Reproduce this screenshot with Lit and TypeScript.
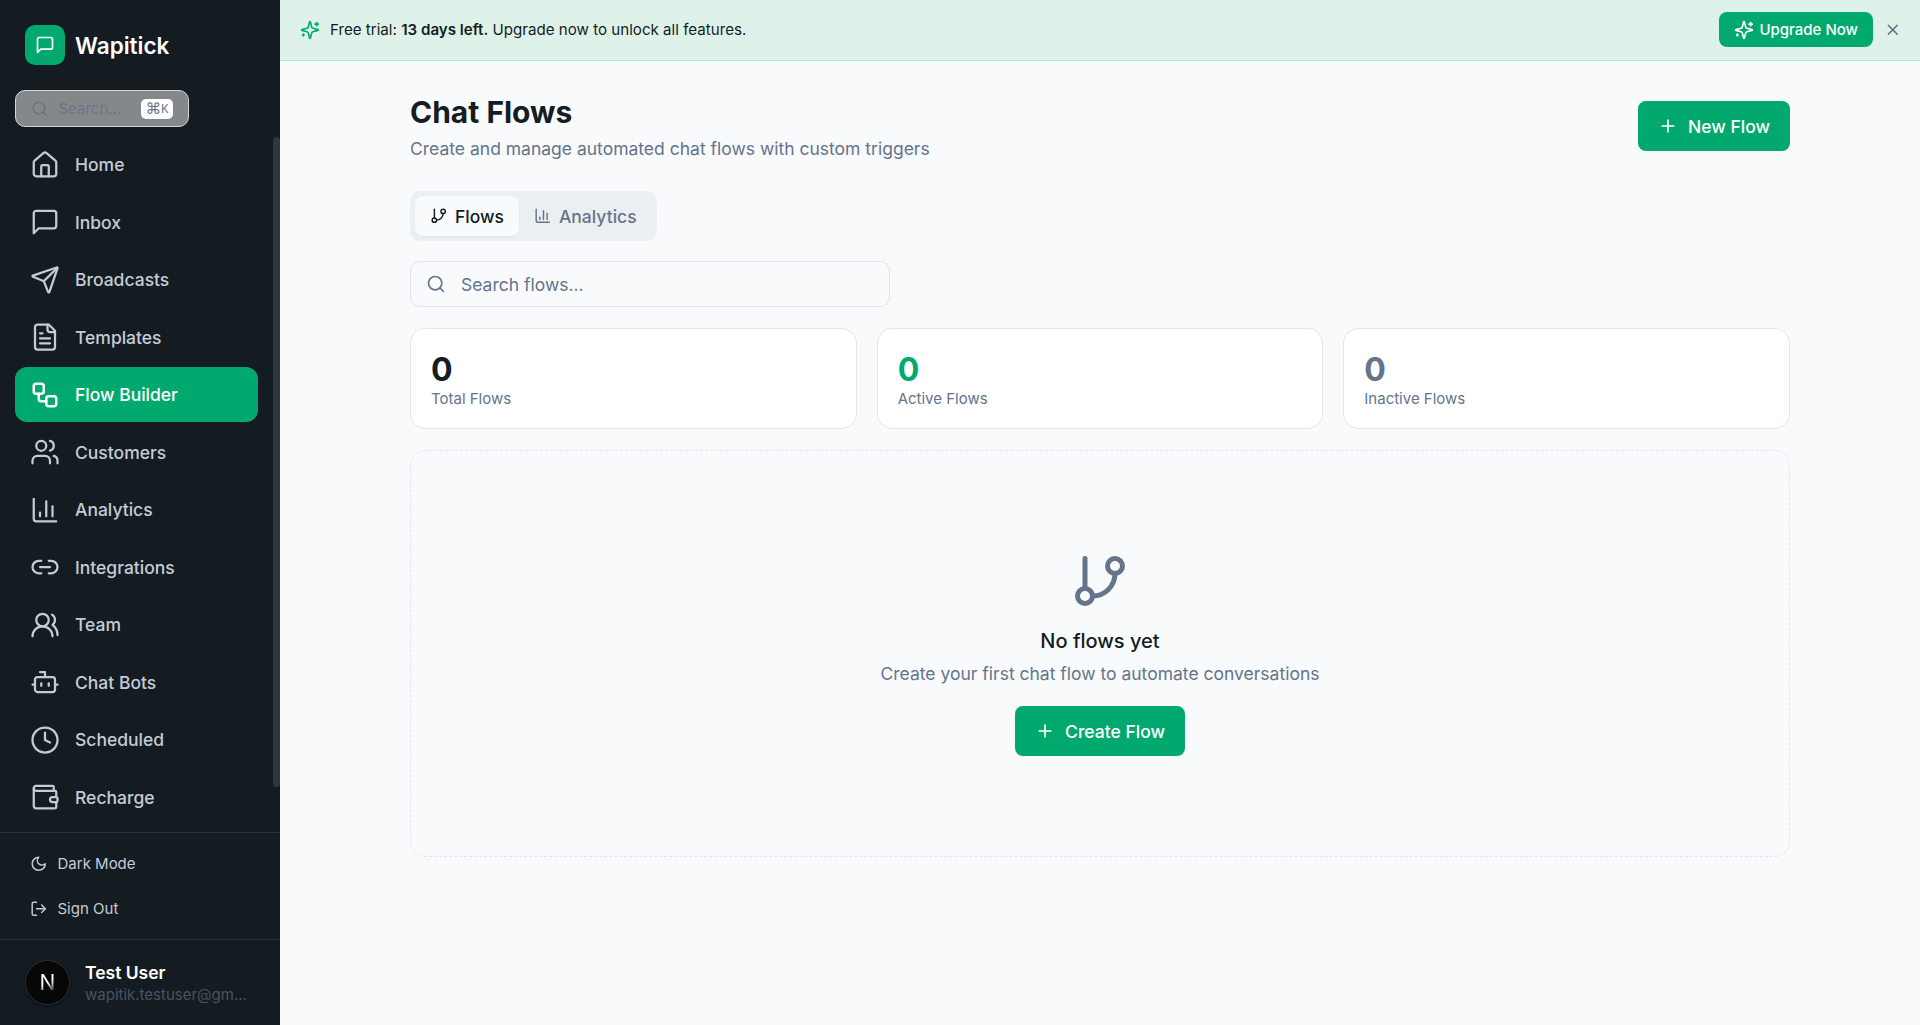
import { LitElement, html, css, svg } from 'lit';
import { customElement } from 'lit/decorators.js';

const icons: Record<string, unknown> = {
  home: svg`<path d="M15 21v-8a1 1 0 0 0-1-1h-4a1 1 0 0 0-1 1v8"/><path d="M3 10a2 2 0 0 1 .709-1.528l7-5.999a2 2 0 0 1 2.582 0l7 5.999A2 2 0 0 1 21 10v9a2 2 0 0 1-2 2H5a2 2 0 0 1-2-2z"/>`,
  inbox: svg`<path d="M21 15a2 2 0 0 1-2 2H7l-4 4V5a2 2 0 0 1 2-2h14a2 2 0 0 1 2 2z"/>`,
  send: svg`<path d="M14.536 21.686a.5.5 0 0 0 .937-.024l6.5-19a.496.496 0 0 0-.635-.635l-19 6.5a.5.5 0 0 0-.024.937l7.93 3.18a2 2 0 0 1 1.112 1.11z"/><path d="m21.854 2.147-10.94 10.939"/>`,
  file: svg`<path d="M15 2H6a2 2 0 0 0-2 2v16a2 2 0 0 0 2 2h12a2 2 0 0 0 2-2V7Z"/><path d="M14 2v4a2 2 0 0 0 2 2h4"/><path d="M10 9H8"/><path d="M16 13H8"/><path d="M16 17H8"/>`,
  workflow: svg`<rect x="3" y="3" width="8" height="8" rx="2"/><path d="M7 11v4a2 2 0 0 0 2 2h4"/><rect x="13" y="13" width="8" height="8" rx="2"/>`,
  users: svg`<path d="M16 21v-2a4 4 0 0 0-4-4H6a4 4 0 0 0-4 4v2"/><circle cx="9" cy="7" r="4"/><path d="M22 21v-2a4 4 0 0 0-3-3.87"/><path d="M16 3.13a4 4 0 0 1 0 7.75"/>`,
  chart: svg`<path d="M3 3v16a2 2 0 0 0 2 2h16"/><path d="M18 17V9"/><path d="M13 17V5"/><path d="M8 17v-3"/>`,
  link: svg`<path d="M9 17H7A5 5 0 0 1 7 7h2"/><path d="M15 7h2a5 5 0 1 1 0 10h-2"/><line x1="8" x2="16" y1="12" y2="12"/>`,
  team: svg`<path d="M18 21a8 8 0 0 0-16 0"/><circle cx="10" cy="8" r="5"/><path d="M22 20c0-3.37-2-6.5-4-8a5 5 0 0 0-.45-8.3"/>`,
  bot: svg`<path d="M12 8V4H8"/><rect width="16" height="12" x="4" y="8" rx="2"/><path d="M2 14h2"/><path d="M20 14h2"/><path d="M15 13v2"/><path d="M9 13v2"/>`,
  clock: svg`<circle cx="12" cy="12" r="10"/><polyline points="12 6 12 12 16 14"/>`,
  wallet: svg`<path d="M19 7V4a1 1 0 0 0-1-1H5a2 2 0 0 0 0 4h15a1 1 0 0 1 1 1v4h-3a2 2 0 0 0 0 4h3a1 1 0 0 0 1-1v-2a1 1 0 0 0-1-1"/><path d="M3 5v14a2 2 0 0 0 2 2h15a1 1 0 0 0 1-1v-4"/>`,
  moon: svg`<path d="M12 3a6 6 0 0 0 9 9 9 9 0 1 1-9-9Z"/>`,
  logout: svg`<path d="M9 21H5a2 2 0 0 1-2-2V5a2 2 0 0 1 2-2h4"/><polyline points="16 17 21 12 16 7"/><line x1="21" x2="9" y1="12" y2="12"/>`,
  sparkles: svg`<path d="M9.937 15.5A2 2 0 0 0 8.5 14.063l-6.135-1.582a.5.5 0 0 1 0-.962L8.5 9.936A2 2 0 0 0 9.937 8.5l1.582-6.135a.5.5 0 0 1 .963 0L14.063 8.5A2 2 0 0 0 15.5 9.937l6.135 1.581a.5.5 0 0 1 0 .964L15.5 14.063a2 2 0 0 0-1.437 1.437l-1.582 6.135a.5.5 0 0 1-.963 0z"/><path d="M20 3v4"/><path d="M22 5h-4"/><path d="M4 17v2"/><path d="M5 18H3"/>`,
  x: svg`<path d="M18 6 6 18"/><path d="m6 6 12 12"/>`,
  plus: svg`<path d="M5 12h14"/><path d="M12 5v14"/>`,
  search: svg`<path d="m21 21-4.34-4.34"/><circle cx="11" cy="11" r="8"/>`,
  branch: svg`<line x1="6" x2="6" y1="3" y2="15"/><circle cx="18" cy="6" r="3"/><circle cx="6" cy="18" r="3"/><path d="M18 9a9 9 0 0 1-9 9"/>`,
};

const icon = (name: string, size: number, stroke = 2) => html`
  <svg class="icon" width=${size} height=${size} viewBox="0 0 24 24" fill="none" stroke="currentColor"
    stroke-width=${stroke} stroke-linecap="round" stroke-linejoin="round">${icons[name]}</svg>`;

const navItems = [
  ['home', 'Home'],
  ['inbox', 'Inbox'],
  ['send', 'Broadcasts'],
  ['file', 'Templates'],
  ['workflow', 'Flow Builder'],
  ['users', 'Customers'],
  ['chart', 'Analytics'],
  ['link', 'Integrations'],
  ['team', 'Team'],
  ['bot', 'Chat Bots'],
  ['clock', 'Scheduled'],
  ['wallet', 'Recharge'],
];

@customElement('app-root')
export class AppRoot extends LitElement {
  static override styles = css`
    :host {
      display: block;
      height: 1025px;
      font-family: Inter, 'Noto Sans', sans-serif;
      color: #141d23;
      overflow: hidden;
    }
    * { box-sizing: border-box; }
    .icon { flex: none; display: block; }

    .app { display: flex; height: 100%; }

    .sidebar {
      width: 280px;
      flex: none;
      background: #141c22;
      display: flex;
      flex-direction: column;
      color: #c3ccd6;
    }
    .brand {
      display: flex;
      gap: 10px;
      padding: 25px 25px 0;
      height: 90px;
      align-items: flex-start;
    }
    .logo {
      width: 40px;
      height: 40px;
      border-radius: 10px;
      background: #02a96f;
      color: #fff;
      display: flex;
      align-items: center;
      justify-content: center;
    }
    .brand-name {
      font-size: 22.5px;
      font-weight: 600;
      line-height: 42px;
      color: #fff;
    }
    .quick-search {
      margin: 0 0 10px 15px;
      width: 174px;
      height: 37px;
      flex: none;
      border-radius: 10px;
      background: #84888b;
      border: 1px solid #d3d6d8;
      display: flex;
      align-items: center;
      padding: 0 15px 0 15px;
      color: #6a7684;
      font-size: 15px;
    }
    .quick-search span { margin-left: 10px; flex: 1; }
    .kbd {
      width: 32px;
      height: 20px;
      background: #fff;
      border-radius: 5px;
      font-size: 11.25px;
      color: #64748b;
      display: flex;
      align-items: center;
      justify-content: center;
    }
    .kbd i { font-style: normal; font-size: 15.5px; font-family: 'DejaVu Sans', sans-serif; }
    .nav-wrap {
      position: relative;
      flex: 1;
      min-height: 0;
    }
    .nav {
      height: 100%;
      overflow: hidden;
      display: flex;
      flex-direction: column;
      gap: 2.5px;
      padding: 0 22px 0 15px;
    }
    .thumb {
      position: absolute;
      right: 0;
      top: 0;
      width: 7px;
      height: 650px;
      background: #2d3740;
      border-radius: 4px;
    }
    .nav-item {
      flex: none;
      height: 55px;
      display: flex;
      align-items: center;
      gap: 15px;
      padding: 0 15px;
      border-radius: 12px;
      font-size: 17.5px;
      font-weight: 500;
    }
    .nav-item.active { background: #02a96f; color: #fff; }
    .side-actions {
      flex: none;
      height: 107px;
      border-top: 1px solid #2a343b;
      padding: 8px 15px 0;
      display: flex;
      flex-direction: column;
    }
    .side-action {
      height: 45px;
      display: flex;
      align-items: center;
      gap: 10px;
      padding: 0 15px;
      font-size: 15px;
    }
    .user {
      flex: none;
      height: 86px;
      border-top: 1px solid #2a343b;
      display: flex;
      align-items: center;
      gap: 15px;
      padding: 0 25px;
    }
    .avatar {
      width: 45px;
      height: 45px;
      flex: none;
      border-radius: 50%;
      background: #070707;
      border: 1px solid #2a2f33;
      box-shadow: 0 2px 4px rgba(0, 0, 0, 0.4);
      display: flex;
      align-items: center;
      justify-content: center;
    }
    .avatar span {
      font-size: 21px;
      font-weight: 400;
      background: linear-gradient(155deg, #fff 50%, #555 80%);
      -webkit-background-clip: text;
      background-clip: text;
      color: transparent;
    }
    .user-text { min-width: 0; flex: 1; padding-top: 2px; }
    .user-name { font-size: 17.5px; font-weight: 600; color: #fff; line-height: 22px; }
    .user-mail {
      font-size: 15px;
      line-height: 22px;
      color: #47545f;
      white-space: nowrap;
      overflow: hidden;
      text-overflow: ellipsis;
    }

    .main {
      flex: 1;
      min-width: 0;
      background: #f9fafc;
      display: flex;
      flex-direction: column;
    }
    .banner {
      flex: none;
      height: 61px;
      background: #dff2ea;
      border-bottom: 1px solid #b0e8d0;
      display: flex;
      align-items: center;
      padding: 0 18.5px 1px 20px;
      font-size: 15.13px;
      color: #141d23;
    }
    .banner-mark { color: #02a96f; margin-right: 10px; }
    .banner-text { flex: 1; }
    .banner-text b { font-weight: 600; }
    .upgrade {
      height: 35px;
      padding: 0 15px;
      border-radius: 8px;
      background: #02a96f;
      color: #fff;
      display: flex;
      align-items: center;
      gap: 5px;
      font-size: 15px;
      font-weight: 500;
    }
    .close { color: #64748b; margin-left: 11px; }

    .content {
      width: 1380px;
      margin: 0 auto;
      padding-top: 33px;
      display: flex;
      flex-direction: column;
    }
    .head {
      display: flex;
      justify-content: space-between;
      align-items: flex-start;
      margin-bottom: 30px;
    }
    h1 {
      margin: 0;
      font-size: 30px;
      font-weight: 700;
      line-height: 36px;
      color: #141d23;
    }
    .sub { margin: 6px 0 0; font-size: 17.5px; line-height: 25px; color: #64748b; }
    .btn {
      height: 50px;
      border-radius: 8px;
      background: #02a96f;
      color: #fff;
      display: inline-flex;
      align-items: center;
      justify-content: center;
      gap: 10px;
      padding: 0 20px;
      font-size: 17.5px;
      font-weight: 500;
    }
    .head .btn { margin-top: 7px; }

    .tabs {
      align-self: flex-start;
      height: 50px;
      padding: 5px;
      border-radius: 10px;
      background: #eceff2;
      display: flex;
      margin-bottom: 20px;
    }
    .tab {
      height: 40px;
      padding: 0 15px;
      border-radius: 8px;
      display: flex;
      align-items: center;
      gap: 7.5px;
      font-size: 17.5px;
      font-weight: 500;
      color: #64748b;
    }
    .tab.active { background: #f9fafc; color: #141d23; box-shadow: 0 1px 2px rgba(0, 0, 0, 0.04); }

    .search {
      width: 480px;
      height: 46px;
      border: 1px solid #e2e6ea;
      border-radius: 10px;
      display: flex;
      align-items: center;
      gap: 15px;
      padding: 0 15px;
      font-size: 17.5px;
      color: #64748b;
      margin-bottom: 20.5px;
    }

    .stats {
      display: grid;
      grid-template-columns: repeat(3, 1fr);
      gap: 20px;
      margin-bottom: 21px;
    }
    .stat {
      height: 101px;
      background: #fff;
      border: 1px solid #e2e6ea;
      border-radius: 15px;
      padding: 22px 20px 0;
    }
    .stat-value { font-size: 32px; font-weight: 700; line-height: 38px; color: #141d23; }
    .stat-value.green { color: #02a96f; }
    .stat-value.slate { color: #64748b; }
    .stat-label { font-size: 15px; line-height: 20px; color: #64748b; }

    .empty {
      height: 407px;
      border: 1px dashed #e2e6ea;
      border-radius: 15px;
      display: flex;
      flex-direction: column;
      align-items: center;
      padding-top: 100px;
    }
    .empty .icon { color: #64748b; }
    .empty-title {
      margin-top: 15px;
      font-size: 20px;
      font-weight: 500;
      line-height: 30px;
      color: #141d23;
    }
    .empty-text { margin-top: 5px; font-size: 17.5px; line-height: 25px; color: #64748b; margin-bottom: 20.5px; }
    .empty .btn .icon { color: #fff; }
  `;

  override render() {
    return html`
      <div class="app">
        <aside class="sidebar">
          <div class="brand">
            <div class="logo">${icon('inbox', 20)}</div>
            <div class="brand-name">Wapitick</div>
          </div>
          <div class="quick-search">
            ${icon('search', 17.5)}
            <span>Search...</span>
            <div class="kbd"><i>⌘</i>K</div>
          </div>
          <div class="nav-wrap">
            <nav class="nav">
              ${navItems.map(([name, label]) => html`
                <div class="nav-item ${label === 'Flow Builder' ? 'active' : ''}">
                  ${icon(name, 30, label === 'Flow Builder' ? 2 : 1.8)}
                  <span>${label}</span>
                </div>`)}
            </nav>
            <div class="thumb"></div>
          </div>
          <div class="side-actions">
            <div class="side-action">${icon('moon', 17.5)}<span>Dark Mode</span></div>
            <div class="side-action">${icon('logout', 17.5)}<span>Sign Out</span></div>
          </div>
          <div class="user">
            <div class="avatar"><span>N</span></div>
            <div class="user-text">
              <div class="user-name">Test User</div>
              <div class="user-mail">wapitik.testuser@gmail.com</div>
            </div>
          </div>
        </aside>
        <main class="main">
          <div class="banner">
            <span class="banner-mark">${icon('sparkles', 20)}</span>
            <span class="banner-text">Free trial: <b>13 days left.</b> Upgrade now to unlock all features.</span>
            <div class="upgrade">${icon('sparkles', 20)}<span>Upgrade Now</span></div>
            <span class="close">${icon('x', 17.5)}</span>
          </div>
          <div class="content">
            <div class="head">
              <div>
                <h1>Chat Flows</h1>
                <p class="sub">Create and manage automated chat flows with custom triggers</p>
              </div>
              <div class="btn">${icon('plus', 20)}<span>New Flow</span></div>
            </div>
            <div class="tabs">
              <div class="tab active">${icon('branch', 17.5)}<span>Flows</span></div>
              <div class="tab">${icon('chart', 17.5)}<span>Analytics</span></div>
            </div>
            <div class="search">${icon('search', 20)}<span>Search flows...</span></div>
            <div class="stats">
              <div class="stat"><div class="stat-value">0</div><div class="stat-label">Total Flows</div></div>
              <div class="stat"><div class="stat-value green">0</div><div class="stat-label">Active Flows</div></div>
              <div class="stat"><div class="stat-value slate">0</div><div class="stat-label">Inactive Flows</div></div>
            </div>
            <div class="empty">
              ${icon('branch', 60)}
              <div class="empty-title">No flows yet</div>
              <div class="empty-text">Create your first chat flow to automate conversations</div>
              <div class="btn">${icon('plus', 20)}<span>Create Flow</span></div>
            </div>
          </div>
        </main>
      </div>
    `;
  }
}
